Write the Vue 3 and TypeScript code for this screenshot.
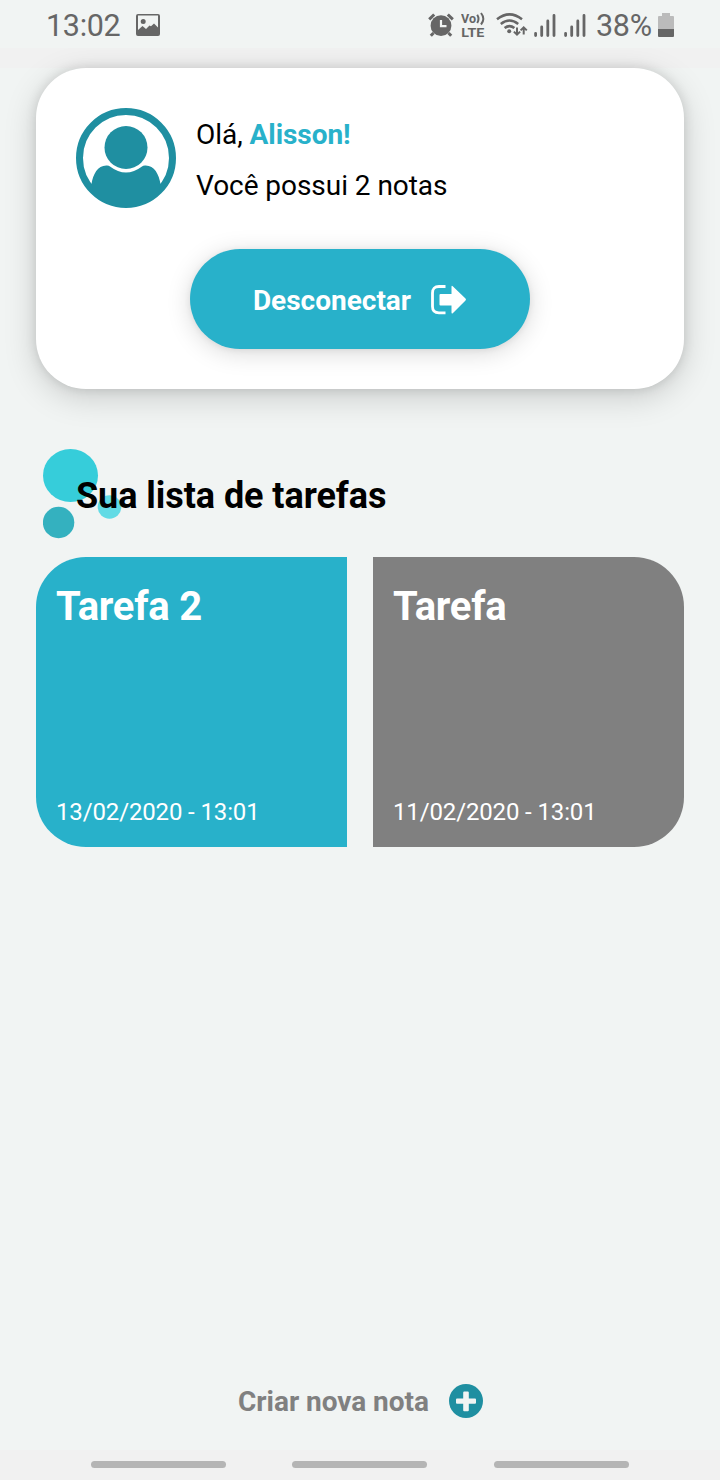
<script setup lang="ts">
interface Task {
  title: string
  date: string
  done: boolean
}

const user = 'Alisson!'
const tasks: Task[] = [
  { title: 'Tarefa 2', date: '13/02/2020 - 13:01', done: false },
  { title: 'Tarefa', date: '11/02/2020 - 13:01', done: true },
]
</script>

<template>
  <div class="screen">
    <header class="status">
      <span class="clock">13:02</span>
      <svg class="photo" width="24" height="22" viewBox="0 0 24 22">
        <path fill="#666" fill-rule="evenodd" d="M2 0H22Q24 0 24 2V20Q24 22 22 22H2Q0 22 0 20V2Q0 0 2 0ZM2 1.6V16L6.5 12L10 15L13.5 11.5L15 12.3L18 9.5L22 13.5V1.6ZM7.2 5A2.5 2.5 0 1 1 7.2 10A2.5 2.5 0 1 1 7.2 5Z" />
      </svg>
      <span class="spacer"></span>
      <svg class="alarm" width="26" height="24" viewBox="0 0 26 24">
        <g fill="none" stroke="#666" stroke-width="3">
          <path d="M1.2 6.3L6.2 1.5M24.8 6.3L19.8 1.5" />
          <path d="M5.5 20L2.8 22.8M20.5 20L23.2 22.8" />
        </g>
        <circle cx="13" cy="12.7" r="10.4" fill="#666" />
        <path d="M13 7V13.2H18.5" fill="none" stroke="#f1f4f3" stroke-width="2.2" />
      </svg>
      <svg class="volte" width="26" height="34" viewBox="0 -4 26 34">
        <g fill="#666" font-family="Roboto, sans-serif" font-weight="700">
          <text x="0" y="11" font-size="13.5" textLength="15" lengthAdjust="spacingAndGlyphs">Vo</text>
          <text x="0.3" y="24.5" font-size="13.5" textLength="23" lengthAdjust="spacingAndGlyphs">LTE</text>
        </g>
        <path d="M16.2 2.7Q18.8 6.8 16.2 11M20 1Q24.6 6.8 20 12.5" fill="none" stroke="#666" stroke-width="2" />
      </svg>
      <svg class="wifi" width="33" height="25" viewBox="0 0 33 25">
        <g fill="none" stroke="#666" stroke-width="2.5">
          <path d="M1 6.3Q13.5 -3.5 26 6.3" />
          <path d="M4.8 11Q13.5 4.1 22.2 11" />
          <path d="M8.6 15.1Q13.5 11.2 18.4 15.1" />
          <path stroke-width="2" d="M21 14.5V21.5M17.9 18.6L21 21.7L24.1 18.6M27.7 21.5V14.5M24.6 17.4L27.7 14.3L30.8 17.4" />
        </g>
        <circle cx="13.2" cy="18.3" r="2" fill="#666" />
      </svg>
      <svg v-for="n in 2" :key="n" class="signal" width="22" height="23" viewBox="0 0 22 23">
        <path d="M1.6 19.3V21.5M7.7 13V21.5M13.8 7V21.5M20 1.5V21.5" fill="none" stroke="#666" stroke-width="2.8" stroke-linecap="round" />
      </svg>
      <span class="percent">38%</span>
      <svg class="battery" width="16" height="24" viewBox="0 0 16 24">
        <path d="M4 0H12V3H15Q16 3 16 4V16H0V4Q0 3 1 3H4Z" fill="#bbb" />
        <path d="M0 16H16V23Q16 24 15 24H1Q0 24 0 23Z" fill="#666" />
      </svg>
    </header>

    <section class="profile">
      <div class="user">
        <svg width="100" height="100" viewBox="0 0 100 100">
          <circle cx="50" cy="50" r="46.5" fill="#fff" stroke="#1f8fa1" stroke-width="7" />
          <circle cx="50" cy="39.5" r="21.5" fill="#1f8fa1" />
          <path d="M15.5 76C17 66 22 57 31 57.5Q33 57.5 34 58.5Q50 70.5 66 58.5Q67 57.5 69 57.5C78 57 83 66 84.5 76L82 86Q69 99 50 99Q31 99 18 86Z" fill="#1f8fa1" />
        </svg>
        <div class="greeting">
          <p>Olá, <b>{{ user }}</b></p>
          <p>Você possui {{ tasks.length }} notas</p>
        </div>
      </div>
      <button class="logout">
        <span>Desconectar</span>
        <svg width="36" height="30" viewBox="0 0 36 30">
          <path d="M14.5 1.5H8Q1.5 1.5 1.5 8V21.5Q1.5 27.8 8 27.8H14.5" fill="none" stroke="#fff" stroke-width="2.8" />
          <path d="M9.5 9H20.5V2Q20.5 0 22 1.5L34.5 13.6Q35.5 14.6 34.5 15.6L22 28Q20.5 29.3 20.5 27.3V20.5H9.5Q8.5 20.5 8.5 19.5V10Q8.5 9 9.5 9Z" fill="#fff" />
        </svg>
      </button>
    </section>

    <div class="heading">
      <svg class="bubbles" width="80" height="92" viewBox="0 0 80 92">
        <ellipse cx="27.5" cy="27.5" rx="27.5" ry="26.5" fill="#36cdda" />
        <circle cx="66.5" cy="59" r="11.8" fill="#62dbe5" />
        <circle cx="15.6" cy="74.5" r="15.7" fill="#34b1bf" />
      </svg>
      <h1>Sua lista de tarefas</h1>
    </div>

    <main class="tasks">
      <article v-for="task in tasks" :key="task.title" class="task" :class="{ done: task.done }">
        <h2>{{ task.title }}</h2>
        <time>{{ task.date }}</time>
      </article>
    </main>

    <button class="create">
      <span>Criar nova nota</span>
      <svg width="34" height="34" viewBox="0 0 34 34">
        <circle cx="17" cy="17" r="17" fill="#1f8fa1" />
        <path d="M14.2 8.5Q14.2 7.5 15.2 7.5H18.8Q19.8 7.5 19.8 8.5V14.5H26Q27 14.5 27 15.5V18.7Q27 19.7 26 19.7H19.8V26.2Q19.8 27.2 18.8 27.2H15.2Q14.2 27.2 14.2 26.2V19.7H8Q7 19.7 7 18.7V15.5Q7 14.5 8 14.5H14.2Z" fill="#f1f4f3" />
      </svg>
    </button>

    <nav class="navbar"><i></i><i></i><i></i></nav>
  </div>
</template>

<style>
body {
  margin: 0;
  background: #f1f4f3;
}
</style>

<style scoped>
.screen {
  width: 720px;
  height: 1480px;
  display: flex;
  flex-direction: column;
  overflow: hidden;
  background: linear-gradient(#f1f1f1, #f1f1f1) 0 48px / 100% 20px no-repeat #f1f4f3;
  font-family: Roboto, "Liberation Sans", sans-serif;
  color: #000;
}
svg {
  display: block;
  flex: none;
}
button {
  border: 0;
  padding: 0;
  font: inherit;
}
.status {
  position: relative;
  z-index: 1;
  box-sizing: border-box;
  height: 48px;
  flex: none;
  display: flex;
  align-items: flex-start;
  padding: 0 46px;
  background: #f1f4f3;
  color: #666;
  font-size: 30.5px;
  line-height: 52px;
}
.clock {
  width: 90px;
  letter-spacing: -0.3px;
}
.photo {
  margin-top: 14px;
}
.spacer {
  flex: 1;
}
.alarm {
  margin: 13px 7px 0 0;
}
.volte {
  margin: 8px 9px 0 0;
}
.wifi {
  margin: 13px 5px 0 0;
}
.signal {
  margin: 14px 8px 0 0;
}
.signal + .signal {
  margin-right: 10px;
}
.percent {
  width: 62px;
  white-space: nowrap;
  letter-spacing: -0.3px;
}
.battery {
  margin-top: 13px;
}
.profile {
  box-sizing: border-box;
  width: 648px;
  height: 321px;
  flex: none;
  margin: 20px 36px 0;
  padding: 40px 40px 0;
  border-radius: 50px;
  background: #fff;
  box-shadow: 0 8px 32px rgba(0, 0, 0, 0.17), 0 0 12px rgba(0, 0, 0, 0.12);
}
.user {
  display: flex;
  gap: 20px;
}
.greeting {
  display: flex;
  flex-direction: column;
  gap: 17px;
  padding-top: 10px;
}
.greeting p {
  margin: 0;
  font-size: 28px;
  line-height: 34px;
  height: 34px;
  letter-spacing: -0.05px;
}
.greeting b {
  color: #28b1ca;
}
.logout {
  width: 340px;
  height: 100px;
  margin: 41px auto 0;
  border-radius: 50px;
  display: flex;
  align-items: center;
  justify-content: center;
  gap: 20px;
  background: #28b1ca;
  color: #fff;
  font-size: 28px;
  font-weight: 700;
  box-shadow: 0 4px 24px rgba(0, 0, 0, 0.15), 0 1px 6px rgba(0, 0, 0, 0.07);
}
.logout span {
  padding-top: 2px;
}
.logout svg {
  margin-top: 1px;
}
.heading {
  position: relative;
  flex: none;
  height: 110px;
  margin: 58px 36px 0;
}
.bubbles {
  position: absolute;
  left: 7px;
  top: 1px;
}
h1 {
  position: relative;
  margin: 0;
  padding: 28px 0 0 40px;
  font-size: 36px;
  line-height: 42px;
  font-weight: 700;
  letter-spacing: -0.06px;
}
.tasks {
  flex: none;
  display: grid;
  grid-template-columns: 311px 311px;
  gap: 26px;
  padding: 0 36px;
}
.task {
  box-sizing: border-box;
  height: 290px;
  display: flex;
  flex-direction: column;
  justify-content: space-between;
  padding: 26px 20px 20px;
  border-radius: 50px 0 0 50px;
  background: #28b1ca;
  color: #fff;
}
.task.done {
  border-radius: 0 50px 50px 0;
  background: #808080;
}
h2 {
  margin: 0;
  font-size: 40px;
  line-height: 48px;
  letter-spacing: -0.22px;
}
time {
  font-size: 24px;
  line-height: 30px;
  letter-spacing: -0.14px;
}
.create {
  display: flex;
  align-items: center;
  justify-content: center;
  gap: 20px;
  height: 60px;
  margin-top: auto;
  margin-bottom: 19px;
  padding-left: 1px;
  background: none;
  color: #808080;
  font-size: 28px;
  font-weight: 700;
  letter-spacing: -0.03px;
}
.navbar {
  box-sizing: border-box;
  flex: none;
  height: 30px;
  display: grid;
  grid-template-columns: 201px 202px 135px;
  padding: 11px 91px 0;
  background: #f1f1f1;
}
.navbar i {
  width: 135px;
  height: 7px;
  border-radius: 4px;
  background: #b5b5b5;
}
</style>
